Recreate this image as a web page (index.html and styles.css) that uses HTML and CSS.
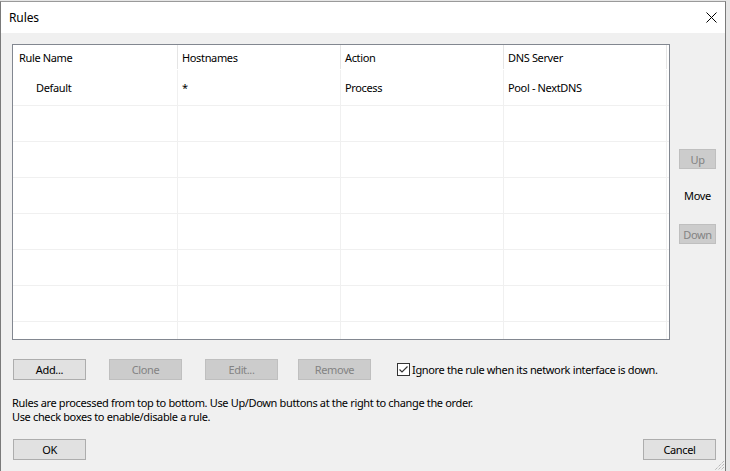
FILE: index.html
```html
<!DOCTYPE html>
<html>
<head>
<meta charset="utf-8">
<link rel="stylesheet" href="styles.css">
</head>
<body>
<div class="window">
  <div class="titlebar">
    <span class="title">Rules</span>
    <svg class="close" width="11" height="11" viewBox="0 0 11 11"><path d="M0.5 0.5 L10.5 10.5 M10.5 0.5 L0.5 10.5" stroke="#000" stroke-width="1" fill="none"/></svg>
  </div>
  <div class="content">
    <div class="top-row">
      <div class="list">
        <div class="grid">
          <div class="hcell first">Rule Name</div>
          <div class="hcell">Hostnames</div>
          <div class="hcell">Action</div>
          <div class="hcell">DNS Server</div>
          <div class="hcell last"></div>

          <div class="cell first indent">Default</div>
          <div class="cell">*</div>
          <div class="cell">Process</div>
          <div class="cell">Pool - NextDNS</div>
          <div class="cell last"></div>

          <div class="cell first"></div><div class="cell"></div><div class="cell"></div><div class="cell"></div><div class="cell last"></div>
          <div class="cell first"></div><div class="cell"></div><div class="cell"></div><div class="cell"></div><div class="cell last"></div>
          <div class="cell first"></div><div class="cell"></div><div class="cell"></div><div class="cell"></div><div class="cell last"></div>
          <div class="cell first"></div><div class="cell"></div><div class="cell"></div><div class="cell"></div><div class="cell last"></div>
          <div class="cell first"></div><div class="cell"></div><div class="cell"></div><div class="cell"></div><div class="cell last"></div>
          <div class="cell first"></div><div class="cell"></div><div class="cell"></div><div class="cell"></div><div class="cell last"></div>
          <div class="cell first"></div><div class="cell"></div><div class="cell"></div><div class="cell"></div><div class="cell last"></div>
        </div>
      </div>
      <div class="side">
        <button class="btn small disabled">Up</button>
        <span class="move">Move</span>
        <button class="btn small disabled">Down</button>
      </div>
    </div>
    <div class="btn-row">
      <button class="btn">Add...</button>
      <button class="btn disabled">Clone</button>
      <button class="btn disabled">Edit...</button>
      <button class="btn disabled remove">Remove</button>
      <label class="check">
        <svg class="box" width="13" height="13" viewBox="0 0 13 13"><rect x="0.5" y="0.5" width="12" height="12" fill="#fff" stroke="#333"/><path d="M2.5 6.5 L5 9 L10.5 3.5" stroke="#333" stroke-width="1.2" fill="none"/></svg>
        <span>Ignore the rule when its network interface is down.</span>
      </label>
    </div>
    <p class="help">Rules are processed from top to bottom. Use Up/Down buttons at the right to change the order.<br>Use check boxes to enable/disable a rule.</p>
    <div class="footer">
      <button class="btn">OK</button>
      <button class="btn">Cancel</button>
    </div>
  </div>
  <svg class="grip" width="11" height="11" viewBox="0 0 11 11"><path d="M10 1 L1 10 M10 4 L4 10 M10 7 L7 10" stroke="#a0a0a0" stroke-width="1" stroke-dasharray="1 1" fill="none"/></svg>
</div>
</body>
</html>
```

FILE: styles.css
```css
html, body {
  margin: 0;
  padding: 0;
}
body {
  background: #e6e6e6;
  width: 730px;
  height: 471px;
  overflow: hidden;
  font-family: "Segoe UI", "Noto Sans", sans-serif;
  font-size: 11px;
  letter-spacing: -0.35px;
  color: #000;
}
.window {
  position: relative;
  margin-top: 1px;
  width: 726px;
  height: 470px;
  border-left: 1px solid #7a7a7a;
  border-right: 1px solid #7a7a7a;
  border-top: 1px solid #9a9a9a;
  background: #f0f0f0;
  box-sizing: border-box;
}
.titlebar {
  height: 31px;
  background: #fff;
  display: flex;
  align-items: center;
  justify-content: space-between;
  padding: 0 8px 0 8px;
}
.title {
  font-size: 12px;
  letter-spacing: -0.1px;
  margin-top: -1px;
}
.close {
  margin-top: -1px;
}
.content {
  padding: 11px 0 0 11px;
}
.top-row {
  display: flex;
  align-items: flex-start;
}
.list {
  width: 658px;
  height: 296px;
  border: 1px solid #828790;
  box-sizing: border-box;
  background: #fff;
  overflow: hidden;
}
.grid {
  display: grid;
  grid-template-columns: 165px 163px 163px 163px 2px;
  grid-auto-rows: 36px;
  grid-template-rows: 25px;
}
.hcell {
  border-right: 1px solid #e5e5e5;
  padding-left: 4px;
  display: flex;
  align-items: center;
  white-space: nowrap;
  height: 24px;
  margin-top: 0;
}
.hcell.first { padding-left: 6px; }
.cell {
  border-right: 1px solid #f0f0f0;
  border-bottom: 1px solid #f0f0f0;
  padding-left: 4px;
  display: flex;
  align-items: center;
  white-space: nowrap;
}
.cell.first { padding-left: 6px; }
.cell.indent { padding-left: 23px; }
.hcell.last, .cell.last { border-right: none; }
.side {
  margin-left: 9px;
  margin-top: 105px;
  width: 37px;
  display: flex;
  flex-direction: column;
  align-items: center;
}
.move {
  margin: 19px 0 20px 0;
  line-height: 16px;
}
.btn {
  font-family: inherit;
  font-size: 11px;
  letter-spacing: -0.35px;
  width: 73px;
  height: 21px;
  padding: 0;
  margin: 0;
  background: #e1e1e1;
  border: 1px solid #adadad;
  color: #000;
  box-sizing: border-box;
}
.btn.small {
  width: 37px;
  height: 20px;
}
.btn.disabled {
  background: #cccccc;
  border-color: #bfbfbf;
  color: #838383;
}
.btn-row {
  display: flex;
  align-items: center;
  gap: 23px;
  margin-top: 19px;
  padding-left: 1px;
}
.btn.remove {
  margin-left: -3px;
}
.check {
  display: flex;
  align-items: center;
  gap: 2px;
  margin-left: 3px;
}
.box { display: block; }
.help {
  margin: 16px 0 0 0;
  line-height: 14px;
  padding-left: 0;
}
.footer {
  display: flex;
  justify-content: space-between;
  margin-top: 15px;
  padding-left: 1px;
  width: 703px;
}
.grip {
  position: absolute;
  right: 0;
  bottom: 0;
}
```
